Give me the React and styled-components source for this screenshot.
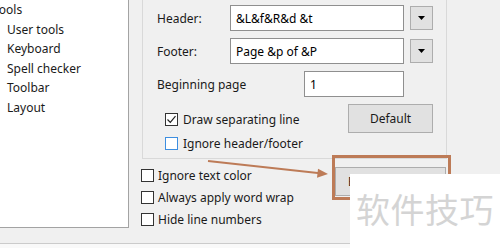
import React from "react";
import styled, { createGlobalStyle } from "styled-components";

const Global = createGlobalStyle`
  html, body { margin: 0; padding: 0; background: #f0f0f0; }
  * { box-sizing: border-box; }
`;

const Page = styled.div`
  position: relative;
  width: 500px;
  height: 248px;
  overflow: hidden;
  background: #f0f0f0;
  display: flex;
  flex-direction: column;
  font-family: "Noto Sans", "Open Sans", sans-serif;
  font-size: 12px;
  color: #000;
`;

const Main = styled.div`
  display: flex;
  height: 243px;
  flex: none;
`;

const Tree = styled.div`
  flex: none;
  width: 129px;
  height: 228px;
  background: #fff;
  border-right: 1px solid #a3a3a3;
  border-bottom: 1px solid #a3a3a3;
  overflow: hidden;
`;

const TreeItem = styled.div`
  height: 19.6px;
  line-height: 19.6px;
  margin-left: ${(p) => p.$level * 14 - 7}px;
  white-space: nowrap;
  color: #1a1a1a;
`;

const RightCol = styled.div`
  margin-left: 12px;
  display: flex;
  flex-direction: column;
`;

const GroupBox = styled.div`
  margin-top: -10px;
  margin-left: 1px;
  width: 305px;
  height: 169px;
  border: 1px solid #d9d9d9;
  padding: 14px 13px 0 14px;
  display: flex;
  flex-direction: column;
  gap: 7px;
`;

const FieldRow = styled.div`
  display: flex;
  align-items: center;
  height: 26px;
`;

const Label = styled.span`
  flex: none;
  width: ${(p) => p.$w}px;
  white-space: nowrap;
  color: #1a1a1a;
`;

const TextInput = styled.input`
  flex: none;
  width: ${(p) => p.$w}px;
  height: 26px;
  margin: 0;
  border: 1px solid #8f8f8f;
  background: #fff;
  padding: 0 5px;
  font: inherit;
  color: #000;
  outline: none;
`;

const DropButton = styled.button`
  flex: none;
  margin-left: 6px;
  width: 23px;
  height: 24px;
  padding: 0;
  border: 1px solid #adadad;
  background: #e1e1e1;
  display: flex;
  align-items: center;
  justify-content: center;
`;

const OptionsArea = styled.div`
  display: flex;
  justify-content: space-between;
  align-items: flex-start;
`;

const CheckColumn = styled.div`
  display: flex;
  flex-direction: column;
  gap: ${(p) => p.$gap}px;
  padding-top: ${(p) => p.$top || 0}px;
  margin-left: ${(p) => p.$left || 0}px;
  width: ${(p) => (p.$w ? `${p.$w}px` : "auto")};
  flex: none;
`;

const CheckRow = styled.div`
  display: flex;
  align-items: center;
  gap: ${(p) => p.$gap}px;
  height: 13px;
  white-space: nowrap;
  color: #1a1a1a;
`;

const Box = styled.span`
  flex: none;
  width: 13px;
  height: 13px;
  border: 1px solid ${(p) => (p.$focus ? "#3d8ee0" : "#333")};
  background: #fff;
  display: flex;
  align-items: center;
  justify-content: center;
`;

const PushButton = styled.button`
  flex: none;
  width: ${(p) => p.$w}px;
  height: 29px;
  margin: ${(p) => p.$m || 0};
  padding: 0 ${(p) => p.$pad || 0}px;
  border: 1px solid #adadad;
  background: #e1e1e1;
  font: inherit;
  color: #1a1a1a;
  text-align: ${(p) => p.$align || "center"};
  white-space: nowrap;
  overflow: hidden;
`;

const OuterArea = styled.div`
  display: flex;
  align-items: flex-start;
  margin-top: 10px;
`;

const Divider = styled.div`
  flex: none;
  height: 5px;
  border-top: 1px solid #cbcbcb;
  background: #f9f9f9;
`;

const Highlight = styled.div`
  position: absolute;
  left: 332px;
  top: 155px;
  width: 119px;
  height: 45px;
  border: 3px solid #bd7b57;
  pointer-events: none;
`;

const ArrowLayer = styled.svg`
  position: absolute;
  left: 0;
  top: 0;
  pointer-events: none;
`;

const Watermark = styled.div`
  position: absolute;
  left: 350px;
  top: 174px;
  right: 0;
  bottom: 0;
  background: #fff;
  padding: 15px 0 0 6px;
  font-family: "Noto Sans CJK SC", sans-serif;
  font-size: 34px;
  line-height: 1.2;
  letter-spacing: 0.5px;
  color: #d4d4d4;
  white-space: nowrap;
`;

const Check = ({ checked, focus, gap = 5, children }) => (
  <CheckRow $gap={gap}>
    <Box $focus={focus}>
      {checked && (
        <svg width="11" height="11" viewBox="0 0 11 11">
          <path d="M1.5 5.5 L4.3 8.3 L9.5 2.2" fill="none" stroke="#222" strokeWidth="1.2" />
        </svg>
      )}
    </Box>
    <span>{children}</span>
  </CheckRow>
);

const DownTri = () => (
  <svg width="7" height="4" viewBox="0 0 7 4">
    <path d="M0 0 H7 L3.5 4 Z" fill="#000" />
  </svg>
);

export default function App() {
  const treeItems = [
    { label: "Tools", level: 0 },
    { label: "User tools", level: 1 },
    { label: "Keyboard", level: 1 },
    { label: "Spell checker", level: 1 },
    { label: "Toolbar", level: 1 },
    { label: "Layout", level: 1 },
  ];
  return (
    <Page>
      <Global />
      <Main>
        <Tree>
          {treeItems.map((t) => (
            <TreeItem key={t.label} $level={t.level}>
              {t.label}
            </TreeItem>
          ))}
        </Tree>
        <RightCol>
          <GroupBox>
            <FieldRow>
              <Label $w={73}>Header:</Label>
              <TextInput $w={174} readOnly value="&L&f&R&d &t" />
              <DropButton>
                <DownTri />
              </DropButton>
            </FieldRow>
            <FieldRow>
              <Label $w={73}>Footer:</Label>
              <TextInput $w={174} readOnly value="Page &p of &P" />
              <DropButton>
                <DownTri />
              </DropButton>
            </FieldRow>
            <FieldRow>
              <Label $w={147}>Beginning page</Label>
              <TextInput $w={100} readOnly value="1" />
            </FieldRow>
            <OptionsArea>
              <CheckColumn $gap={11} $top={9} $left={8}>
                <Check checked>Draw separating line</Check>
                <Check focus>Ignore header/footer</Check>
              </CheckColumn>
              <PushButton $w={85}>Default</PushButton>
            </OptionsArea>
          </GroupBox>
          <OuterArea>
            <CheckColumn $gap={9} $w={194}>
              <Check gap={4}>Ignore text color</Check>
              <Check gap={4}>Always apply word wrap</Check>
              <Check gap={4}>Hide line numbers</Check>
            </CheckColumn>
            <PushButton $w={111} $m="-2px 0 0 0" $pad={12} $align="left">
              Edit colors...
            </PushButton>
          </OuterArea>
        </RightCol>
      </Main>
      <Divider />
      <ArrowLayer width="500" height="248" viewBox="0 0 500 248">
        <line x1="208" y1="161" x2="320" y2="173.2" stroke="#bd7b57" strokeWidth="2" />
        <path d="M328 174 L318 168.8 L317 177.8 Z" fill="#bd7b57" />
      </ArrowLayer>
      <Highlight />
      <Watermark>软件技巧</Watermark>
    </Page>
  );
}
